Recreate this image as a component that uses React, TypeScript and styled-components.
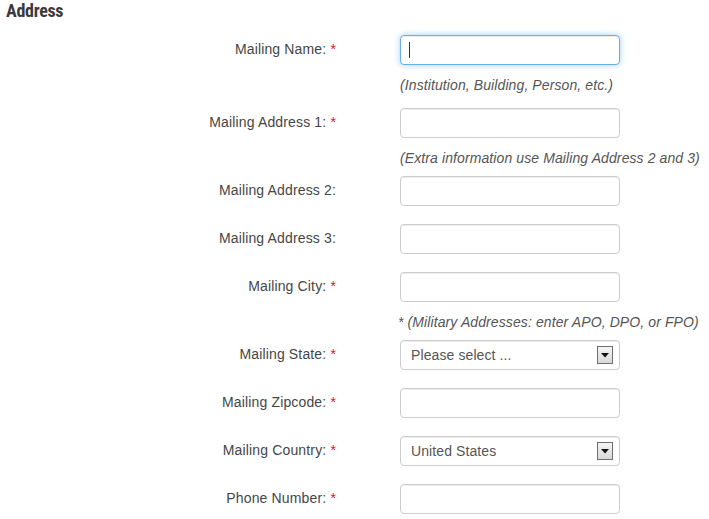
import React from "react";
import styled, { createGlobalStyle } from "styled-components";

const Global = createGlobalStyle`
  html, body { margin: 0; padding: 0; background: #ffffff; }
  body { font-family: Arial, "Liberation Sans", sans-serif; color: #444; }
`;

const Page = styled.div`
  width: 709px;
`;

const Heading = styled.h2`
  margin: 0 0 13px 6px;
  font-family: "Liberation Sans Narrow", "Arial Narrow", "Roboto Condensed", Roboto, sans-serif;
  font-size: 18px;
  font-weight: bold;
  line-height: 22px;
  color: #3a3a3a;
  letter-spacing: -0.3px;
`;

const Form = styled.div`
  display: flex;
  flex-direction: column;
`;

const Row = styled.div<{ $gap: number }>`
  display: grid;
  grid-template-columns: 336px 220px;
  column-gap: 64px;
  align-items: center;
  margin-bottom: ${(p) => p.$gap}px;
`;

const Label = styled.label`
  text-align: right;
  font-size: 14px;
  line-height: 18px;
  padding-bottom: 3px;
  color: #464646;
  letter-spacing: 0.15px;
  white-space: nowrap;
`;

const Req = styled.span`
  color: #e8101c;
`;

const Input = styled.div<{ $focus?: boolean }>`
  box-sizing: border-box;
  height: 30px;
  border: 1px solid ${(p) => (p.$focus ? "#66afe9" : "#cccccc")};
  border-radius: 4px;
  background: #fff;
  box-shadow: ${(p) =>
    p.$focus
      ? "inset 0 1px 1px rgba(0,0,0,.075), 0 0 6px rgba(102,175,233,.6)"
      : "inset 0 1px 1px rgba(0,0,0,.075)"};
  display: flex;
  align-items: center;
  padding: 0 10px 0 8px;
  font-size: 14px;
  color: #555;
`;

const Caret = styled.span`
  display: inline-block;
  width: 1px;
  height: 16px;
  background: #333;
`;

const SelectText = styled.span`
  flex: 1;
  padding-left: 2px;
  color: #555;
  letter-spacing: 0.1px;
`;

const ArrowBox = styled.span`
  box-sizing: border-box;
  width: 16px;
  height: 18px;
  border: 1px solid #6f6f6f;
  background: linear-gradient(#f4f4f4, #d9d9d9);
  display: flex;
  align-items: center;
  justify-content: center;
  margin-right: -4px;
`;

const Hint = styled.div<{ $top: number; $bottom: number; $shift?: number }>`
  margin: ${(p) => p.$top}px 0 ${(p) => p.$bottom}px ${(p) => 400 + (p.$shift || 0)}px;
  font-size: 14px;
  line-height: 20px;
  font-style: italic;
  color: #555;
  letter-spacing: 0.1px;
  white-space: nowrap;
`;

type Field = {
  label: string;
  req: boolean;
  kind?: "text" | "select";
  value?: string;
  focus?: boolean;
  gap: number;
  hint?: { text: string; top: number; bottom: number; shift?: number };
};

const fields: Field[] = [
  {
    label: "Mailing Name:",
    req: true,
    focus: true,
    gap: 0,
    hint: { text: "(Institution, Building, Person, etc.)", top: 10, bottom: 13 },
  },
  {
    label: "Mailing Address 1:",
    req: true,
    gap: 0,
    hint: { text: "(Extra information use Mailing Address 2 and 3)", top: 10, bottom: 8 },
  },
  { label: "Mailing Address 2:", req: false, gap: 18 },
  { label: "Mailing Address 3:", req: false, gap: 18 },
  {
    label: "Mailing City:",
    req: true,
    gap: 0,
    hint: { text: "* (Military Addresses: enter APO, DPO, or FPO)", top: 10, bottom: 8, shift: -2 },
  },
  { label: "Mailing State:", req: true, kind: "select", value: "Please select ...", gap: 18 },
  { label: "Mailing Zipcode:", req: true, gap: 18 },
  { label: "Mailing Country:", req: true, kind: "select", value: "United States", gap: 18 },
  { label: "Phone Number:", req: true, gap: 0 },
];

export default function App() {
  return (
    <Page>
      <Global />
      <Heading>Address</Heading>
      <Form>
        {fields.map((f) => (
          <React.Fragment key={f.label}>
            <Row $gap={f.gap}>
              <Label>
                {f.label}
                {f.req && (
                  <>
                    {" "}
                    <Req>*</Req>
                  </>
                )}
              </Label>
              {f.kind === "select" ? (
                <Input>
                  <SelectText>{f.value}</SelectText>
                  <ArrowBox>
                    <svg width="8" height="5" viewBox="0 0 8 5">
                      <path d="M0 0 H8 L4 4.5 Z" fill="#111" />
                    </svg>
                  </ArrowBox>
                </Input>
              ) : (
                <Input $focus={f.focus}>{f.focus && <Caret />}</Input>
              )}
            </Row>
            {f.hint && (
              <Hint $top={f.hint.top} $bottom={f.hint.bottom} $shift={f.hint.shift}>
                {f.hint.text}
              </Hint>
            )}
          </React.Fragment>
        ))}
      </Form>
    </Page>
  );
}
